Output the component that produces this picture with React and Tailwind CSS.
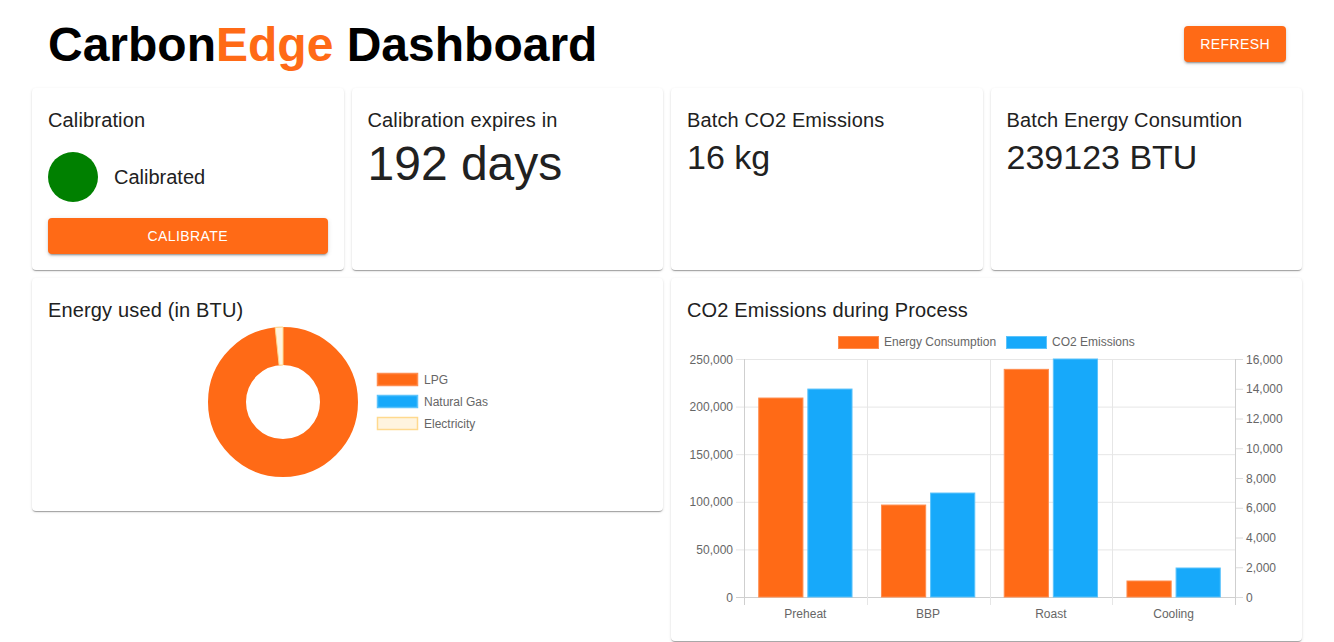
import React from "react";

const ORANGE = "#ff6a16";
const BLUE = "#17a9fa";

const energyBars = [209000, 96600, 239123, 16800];
const co2Bars = [13980, 6990, 16000, 1950];
const stages = ["Preheat", "BBP", "Roast", "Cooling"];

function Card({ className = "", children }) {
  return (
    <div
      className={`bg-white rounded-[4px] shadow-[0px_2px_1px_-1px_rgba(0,0,0,0.2),0px_1px_1px_0px_rgba(0,0,0,0.14),0px_1px_3px_0px_rgba(0,0,0,0.12)] px-4 pt-4 ${className}`}
    >
      {children}
    </div>
  );
}

function CardTitle({ children }) {
  return <div className="text-[20px] leading-[32px] tracking-[0.15px] text-[#212121]">{children}</div>;
}

function EnergyDonut() {
  // doughnut, legend to the right
  const cx = 235;
  const cy = 76;
  const ro = 75;
  const ri = 37;
  const pt = (r, deg) => {
    const a = ((deg - 90) * Math.PI) / 180;
    return [cx + r * Math.cos(a), cy + r * Math.sin(a)];
  };
  const a0 = 354;
  const a1 = 360;
  const [x1, y1] = pt(ro, a0);
  const [x2, y2] = pt(ro, a1);
  const [x3, y3] = pt(ri, a1);
  const [x4, y4] = pt(ri, a0);
  const slice = `M${x1} ${y1} A${ro} ${ro} 0 0 1 ${x2} ${y2} L${x3} ${y3} A${ri} ${ri} 0 0 0 ${x4} ${y4} Z`;

  const legend = [
    { label: "LPG", fill: ORANGE, stroke: "#ff8d4f", y: 53 },
    { label: "Natural Gas", fill: BLUE, stroke: "#5cc3fb", y: 75 },
    { label: "Electricity", fill: "#fff4df", stroke: "#ffd98e", y: 97 },
  ];

  return (
    <svg width="599" height="161" className="block overflow-visible" style={{ fontFamily: "'Liberation Sans', Arial, sans-serif" }}>
      <circle cx={cx} cy={cy} r={(ro + ri) / 2} fill="none" stroke={ORANGE} strokeWidth={ro - ri} />
      <path d={slice} fill="#fff4df" stroke="#ffd98e" strokeWidth="1" />
      {legend.map((l) => (
        <g key={l.label}>
          <rect x="329.5" y={l.y - 5.5} width="40" height="12" fill={l.fill} stroke={l.stroke} strokeWidth="1.5" />
          <text x="376" y={l.y + 4.5} fontSize="12" fill="#666">
            {l.label}
          </text>
        </g>
      ))}
    </svg>
  );
}

function EmissionsChart() {
  const left = 57;
  const right = 548;
  const top = 33;
  const bottom = 271;
  const h = bottom - top;
  const cat = (right - left) / 4;
  const barW = 44.2;
  const leftTicks = [0, 50000, 100000, 150000, 200000, 250000];
  const rightTicks = [0, 2000, 4000, 6000, 8000, 10000, 12000, 14000, 16000];
  const fmt = (n) => n.toLocaleString("en-US");

  return (
    <svg width="599" height="291" className="block overflow-visible" style={{ fontFamily: "'Liberation Sans', Arial, sans-serif" }}>
      {/* legend */}
      <rect x="151.5" y="10.5" width="40" height="12" fill={ORANGE} stroke="#ff8d4f" />
      <text x="197" y="20" fontSize="12" fill="#666">Energy Consumption</text>
      <rect x="319.5" y="10.5" width="40" height="12" fill={BLUE} stroke="#5cc3fb" />
      <text x="365" y="20" fontSize="12" fill="#666">CO2 Emissions</text>

      {/* horizontal grid + left ticks */}
      {leftTicks.map((t) => {
        const y = bottom - (t / 250000) * h + 0.5;
        return (
          <g key={t}>
            <line x1={left - 8} x2={right} y1={y} y2={y} stroke={t === 0 ? "#cfcfcf" : "#e6e6e6"} />
            <text x="46" y={y + 4} fontSize="12" fill="#666" textAnchor="end">
              {fmt(t)}
            </text>
          </g>
        );
      })}

      {/* right ticks */}
      {rightTicks.map((t) => {
        const y = bottom - (t / 16000) * h + 0.5;
        return (
          <g key={t}>
            <line x1={right} x2={right + 8} y1={y} y2={y} stroke="#dcdcdc" />
            <text x="559" y={y + 4} fontSize="12" fill="#666">
              {fmt(t)}
            </text>
          </g>
        );
      })}

      {/* vertical grid */}
      {[0, 1, 2, 3, 4].map((i) => {
        const x = Math.round(left + i * cat) + 0.5;
        return (
          <line
            key={i}
            x1={x}
            x2={x}
            y1={top}
            y2={bottom + 8}
            stroke={i === 0 || i === 4 ? "#cfcfcf" : "#e6e6e6"}
          />
        );
      })}

      {/* bars */}
      {stages.map((s, i) => {
        const x0 = left + i * cat + cat * 0.1 + 2.45;
        const eh = (energyBars[i] / 250000) * h;
        const ch = (Math.min(co2Bars[i], 16000) / 16000) * h;
        return (
          <g key={s}>
            <rect x={x0} y={bottom - eh} width={barW} height={eh} fill={ORANGE} stroke="#ff8d4f" strokeWidth="1" />
            <rect x={x0 + 49.1} y={bottom - ch} width={barW} height={ch} fill={BLUE} stroke="#5cc3fb" strokeWidth="1" />
            <text x={left + i * cat + cat / 2} y="292" fontSize="12" fill="#666" textAnchor="middle">
              {s}
            </text>
          </g>
        );
      })}
    </svg>
  );
}

export default function App() {
  return (
    <div className="min-h-screen bg-white" style={{ fontFamily: "'Liberation Sans', Arial, sans-serif" }}>
      {/* header */}
      <div className="h-[88px] px-12 flex items-center justify-between">
        <h1 className="text-[48px] leading-[55px] font-bold text-black">
          Carbon<span className="text-[#ff6a16]">Edge</span> Dashboard
        </h1>
        <button className="h-9 px-4 rounded-[4px] bg-[#ff6a16] text-white text-[14px] tracking-[0.4px] font-normal uppercase shadow-[0px_3px_1px_-2px_rgba(0,0,0,0.2),0px_2px_2px_0px_rgba(0,0,0,0.14),0px_1px_5px_0px_rgba(0,0,0,0.12)]">
          Refresh
        </button>
      </div>

      <div className="px-8 grid grid-cols-4 gap-2 items-start">
        {/* calibration */}
        <Card className="pb-4 self-stretch">
          <CardTitle>Calibration</CardTitle>
          <div className="mt-4 flex items-center gap-4">
            <div className="w-[50px] h-[50px] rounded-full bg-[#008000]" />
            <div className="text-[20px] text-[#212121]">Calibrated</div>
          </div>
          <button className="mt-4 w-full h-9 rounded-[4px] bg-[#ff6a16] text-white text-[14px] tracking-[0.4px] font-normal uppercase shadow-[0px_3px_1px_-2px_rgba(0,0,0,0.2),0px_2px_2px_0px_rgba(0,0,0,0.14),0px_1px_5px_0px_rgba(0,0,0,0.12)]">
            Calibrate
          </button>
        </Card>

        <Card className="self-stretch">
          <CardTitle>Calibration expires in</CardTitle>
          <div className="text-[48px] leading-[56px] text-[#212121]">192 days</div>
        </Card>

        <Card className="self-stretch">
          <CardTitle>Batch CO2 Emissions</CardTitle>
          <div className="text-[34px] leading-[42px] text-[#212121]">16 kg</div>
        </Card>

        <Card className="self-stretch">
          <CardTitle>Batch Energy Consumtion</CardTitle>
          <div className="text-[34px] leading-[42px] text-[#212121]">239123 BTU</div>
        </Card>

        {/* energy donut */}
        <Card className="col-span-2 pb-6">
          <CardTitle>Energy used (in BTU)</CardTitle>
          <EnergyDonut />
        </Card>

        {/* emissions bar chart */}
        <Card className="col-span-2 pb-6">
          <CardTitle>CO2 Emissions during Process</CardTitle>
          <EmissionsChart />
        </Card>
      </div>
    </div>
  );
}
